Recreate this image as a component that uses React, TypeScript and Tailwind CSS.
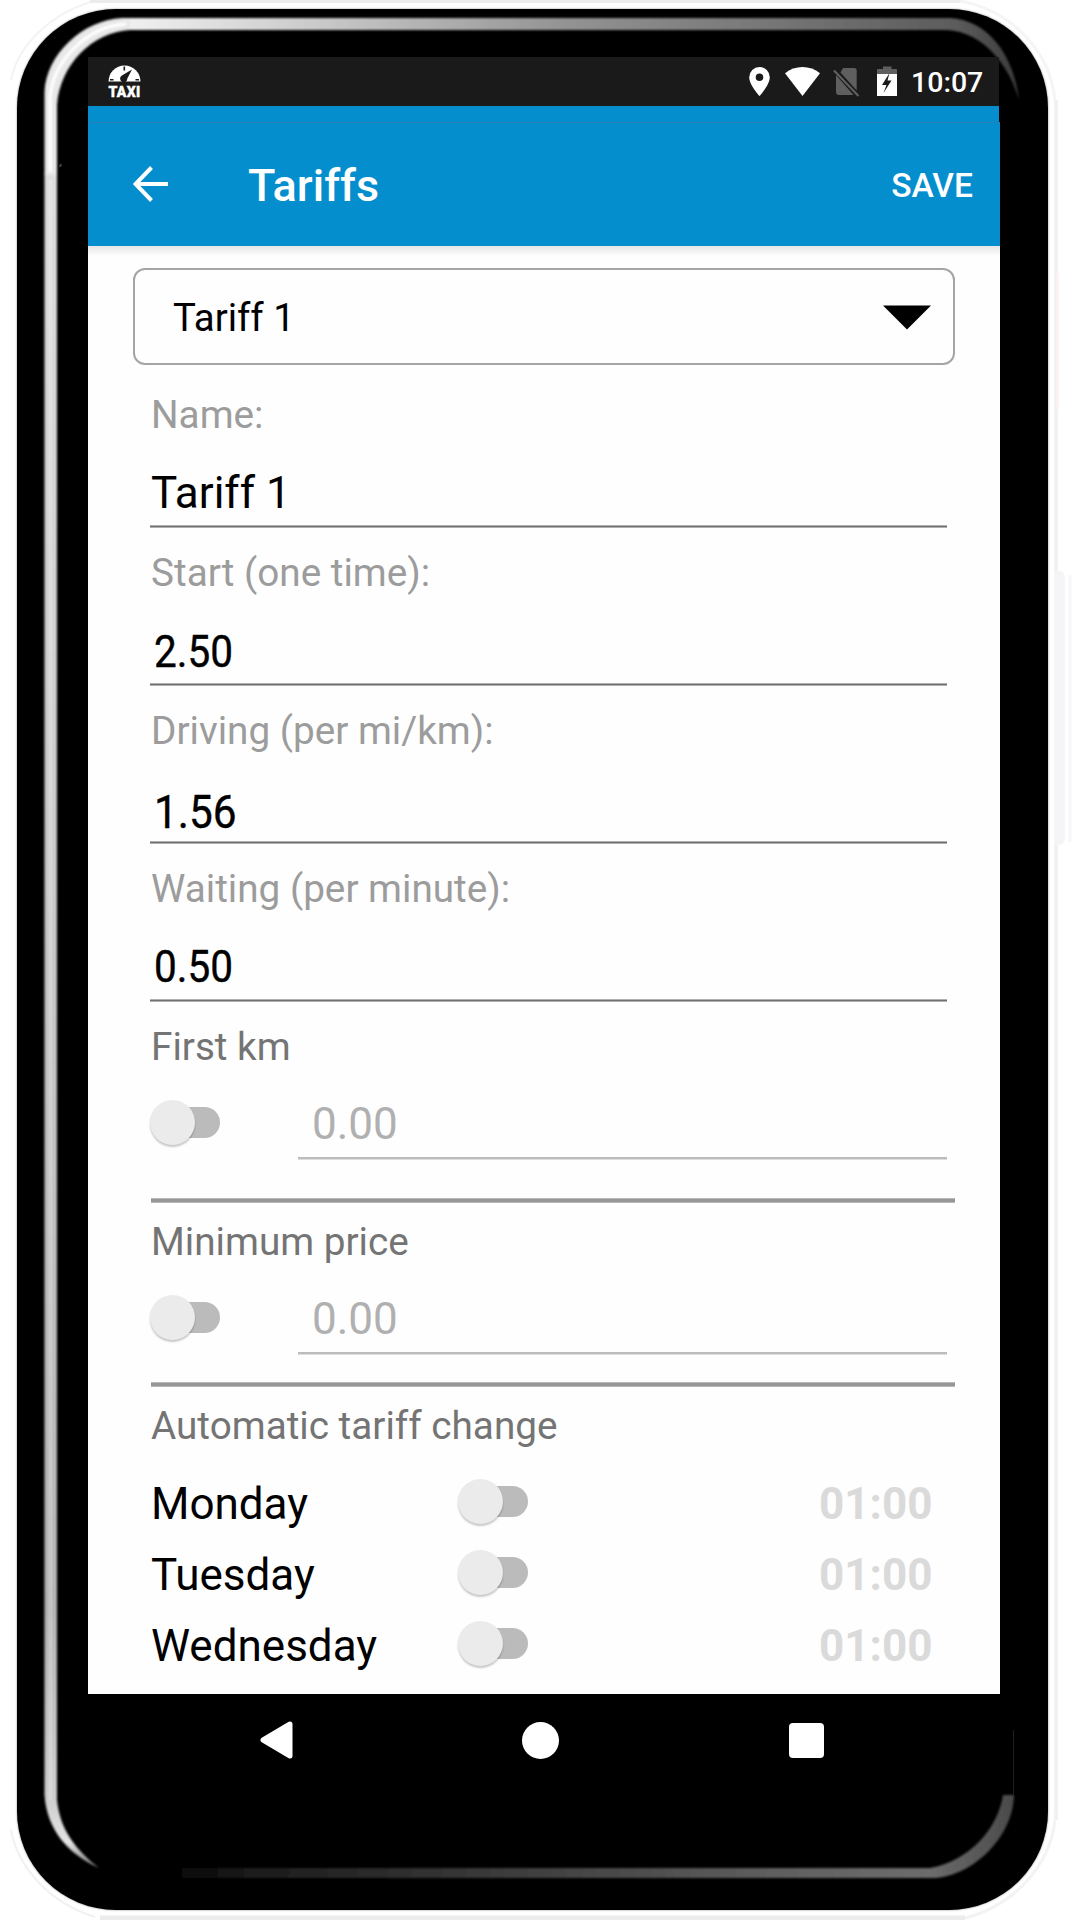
import React, { useState } from "react";

const fields = [
    { label: "Name:", value: "Tariff 1", className: "text-[44px] translate-x-[1px] translate-y-[1px]" },
    {
        label: "Start (one time):",
        value: "2.50",
        className:
            "text-[45px] translate-x-[4px] translate-y-[2px] scale-x-[0.9] [-webkit-text-stroke:0.4px_#000]",
    },
    {
        label: "Driving (per mi/km):",
        value: "1.56",
        className:
            "text-[46px] translate-x-[4px] translate-y-[4px] scale-x-[0.92] [-webkit-text-stroke:0.4px_#000]",
    },
    {
        label: "Waiting (per minute):",
        value: "0.50",
        className:
            "text-[45px] translate-x-[4px] translate-y-[1px] scale-x-[0.9] [-webkit-text-stroke:0.4px_#000]",
    },
];

const days = ["Monday", "Tuesday", "Wednesday"];

const Bezel: React.FC = () => (
    <svg
        className="absolute top-0 left-0"
        width="1080"
        height="1920"
        viewBox="0 0 1080 1920"
        fill="none"
    >
        <defs>
            <linearGradient id="top" gradientUnits="userSpaceOnUse" x1="110" y1="0" x2="1020" y2="0">
                <stop offset="0" stopColor="#f4f4f4" />
                <stop offset="0.2" stopColor="#cfcfcf" />
                <stop offset="0.5" stopColor="#939393" />
                <stop offset="0.93" stopColor="#5c5c5c" />
                <stop offset="1" stopColor="#3a3a3a" />
            </linearGradient>
            <linearGradient id="side" gradientUnits="userSpaceOnUse" x1="0" y1="170" x2="0" y2="1868">
                <stop offset="0" stopColor="#dedede" />
                <stop offset="0.85" stopColor="#b5b5b5" />
                <stop offset="0.96" stopColor="#cfcfcf" />
                <stop offset="0.985" stopColor="#e4e4e4" />
                <stop offset="1" stopColor="#777" />
            </linearGradient>
            <linearGradient id="bottom" gradientUnits="userSpaceOnUse" x1="160" y1="0" x2="1014" y2="0">
                <stop offset="0" stopColor="#000" />
                <stop offset="0.1" stopColor="#1a1a1a" />
                <stop offset="0.75" stopColor="#626262" />
                <stop offset="0.9" stopColor="#6c6c6c" />
                <stop offset="1" stopColor="#4a4a4a" />
            </linearGradient>
            <filter id="soft" x="-5%" y="-5%" width="110%" height="110%">
                <feGaussianBlur stdDeviation="0.8" />
            </filter>
        </defs>
        {/* faint outline around the body */}
        <path d="M90 1H960" stroke="#ececec" strokeWidth="4" />
        <path d="M100 1918H965" stroke="#ececec" strokeWidth="5" />
        <path d="M1056 100V1820" stroke="#f2f2f2" strokeWidth="4" />
        <path d="M1057 273V410" stroke="#fbf1ee" strokeWidth="3" />
        <path d="M11 80C18 45 50 15 90 2" stroke="#f3f3f3" strokeWidth="2" />
        <path d="M11 1830C18 1868 50 1903 95 1917" stroke="#f1f1f1" strokeWidth="2" />
        <path d="M1055 1820C1050 1865 1015 1905 965 1918" stroke="#f3f3f3" strokeWidth="3" />
        <path d="M960 1C1010 10 1050 50 1055 100" stroke="#f5f5f5" strokeWidth="3" />
        <path d="M1054 571H1061Q1065 573 1065 580V838Q1064 844 1060 845H1054Z" fill="#f5f4f6" />
        <path d="M1070 575V842" stroke="#f8f6f7" strokeWidth="3" />
        {/* highlights */}
        <g filter="url(#soft)">
            <path d="M122 18H950C988 20 1014 55 1019 100C1010 68 985 32 947 30H122Z" fill="url(#top)" />
            <path d="M44.500 174H57V1800C60 1830 76 1850 99 1868C68 1854 47 1830 44.500 1795Z" fill="url(#side)" />
            <path d="M44.500 175V92C46 55 82 20 122 18H130V30C92 32 60 65 57 105V175Z" fill="#e8e8e8" />
            <path d="M50 172V98C53 60 88 26 126 24" stroke="#fff" strokeWidth="3" />
            <path d="M160 1868H930C970 1861 998 1828 1003 1795H1014C1013 1838 972 1876 935 1878H160Z" fill="url(#bottom)" />
        </g>
        <path d="M50.500 180V1800" stroke="#fff" strokeOpacity="0.2" strokeWidth="4" />
        <path d="M1013.500 1730V1795" stroke="#202020" strokeWidth="1" />
        <path d="M60 167l1-3" stroke="#444" strokeWidth="2" />
    </svg>
);

const StatusBar: React.FC = () => (
    <div className="flex h-[49px] w-[911px] items-start bg-[#1a1a1a]">
        <div className="ml-[20px] mt-[8px] flex w-[33px] flex-col items-center">
            <svg width="33" height="17" viewBox="0 0 33 17">
                <path d="M0.500 16.500A16 16 0 0 1 32.500 16.500Z" fill="#fff" />
                <path d="M24 4.500L19.300 13.500A3.600 3.600 0 1 1 13.500 10.800Z" fill="#1a1a1a" />
                <path d="M16.300 1.500V5.500M2 14.800H5.500M27.500 14.800H31" stroke="#1a1a1a" strokeWidth="1.600" />
            </svg>
            <span className="mt-[3px] text-[14px] leading-[15px] font-black tracking-[0.3px] text-white [-webkit-text-stroke:0.4px_#fff]">
                TAXI
            </span>
        </div>
        <svg className="ml-[608px] mt-[10px]" width="21" height="29" viewBox="0 0 21 29">
            <path
                d="M10.500 0A10.300 10.300 0 0 0 0.200 10.300C0.200 18 10.500 29 10.500 29S20.800 18 20.800 10.300A10.300 10.300 0 0 0 10.500 0ZM10.500 6.500A3.800 3.800 0 1 1 10.500 14.100A3.800 3.800 0 0 1 10.500 6.500Z"
                fill="#fff"
            />
        </svg>
        <svg className="ml-[15px] mt-[10px]" width="35" height="29" viewBox="0 0 35 29">
            <path d="M0 6.300C10 -2 25 -2 35 6.300L17.500 29Z" fill="#fff" />
        </svg>
        <svg className="ml-[13px] mt-[10px]" width="27" height="31" viewBox="0 0 27 31">
            <path d="M10 1H21Q23.700 1 23.700 3.700V23.500L7.500 5.500ZM3 8L20.500 28H6Q3 28 3 25Z" fill="#5f5f5f" />
            <path d="M1 3.500L25.500 29" stroke="#5f5f5f" strokeWidth="2.200" />
        </svg>
        <svg className="ml-[17px] mt-[9px]" width="20" height="30" viewBox="0 0 20 30">
            <path d="M0 8V3.500Q0 3 1 3H6V0.500H14.500V3H19Q20 3 20 3.500V8Z" fill="#5f5f5f" />
            <path d="M0 8H20V30H0Z" fill="#fff" />
            <path d="M12.500 7L5 19H9.500L6.500 27L14.500 14.500H10.500Z" fill="#1a1a1a" />
        </svg>
        <span className="ml-[14px] mt-[8px] text-[28.5px] leading-[36px] font-medium text-white">
            10:07
        </span>
    </div>
);

const Toggle: React.FC = () => {
    const [on, setOn] = useState(false);
    return (
        <button
            onClick={() => setOn(!on)}
            className="relative flex h-[45px] w-[70px] shrink-0 items-center justify-end"
        >
            <span className="h-[31px] w-[60px] rounded-full bg-[#bbbbbb]" />
            <span
                className={`absolute top-0 size-[45px] rounded-full bg-[#ebebeb] shadow-[0_2px_2px_rgba(0,0,0,0.22)] ${
                    on ? "right-0" : "left-0"
                }`}
            />
        </button>
    );
};

const OptionalPrice: React.FC<{ label: string }> = ({ label }) => (
    <>
        <p className="ml-[63px] h-[46px] text-[38.7px] leading-[46px] text-[#747474]">{label}</p>
        <div className="ml-[62px] mt-[26px] flex">
            <div className="mt-[4px]">
                <Toggle />
            </div>
            <div className="ml-[78px] w-[649px]">
                <p className="h-[54px] pt-px pl-[14px] text-[44px] leading-[54px] text-[#b0b0b0]">0.00</p>
                <div className="mt-[7px] h-[3px] border-b border-[#dedede] bg-[#bcbcbc]" />
            </div>
        </div>
    </>
);

const App: React.FC = () => {
    return (
        <div className="relative h-[1920px] w-[1080px] overflow-hidden bg-white pt-[9px] pl-[17px] font-[Roboto,sans-serif]">
            <div className="h-[1901px] w-[1031px] rounded-[99px] bg-black pt-[48px] pl-[71px] shadow-[0_0_2px_#777]">
                <Bezel />
                <div className="relative w-[912px]">
                    <StatusBar />
                    <div className="h-[16px] w-[911px] bg-[#048ece]" />
                    <header className="flex h-[124px] items-start border-t border-[#2381b5] bg-[#048ece] text-white">
                        <svg className="ml-[45px] mt-[43px]" width="36" height="36" viewBox="0 0 36 36">
                            <path d="M18.500 1.500L2.500 18L18.500 34.500M2.500 18H35" fill="none" stroke="#fff" strokeWidth="4" />
                        </svg>
                        <h1 className="ml-[79px] mt-[36px] text-[45px] leading-[54px] font-medium">
                            Tariffs
                        </h1>
                        <button className="mr-[27px] ml-auto mt-[43px] text-[33.6px] leading-[40px] font-medium">
                            SAVE
                        </button>
                    </header>
                    <main className="h-[1448px] overflow-hidden bg-[#fefefe]">
                        <div className="h-[10px] bg-linear-to-b from-[#e6e6e6] to-[#fefefe]" />
                        <div className="mt-[12px] ml-[45px] flex h-[97px] w-[822px] items-center justify-between rounded-[12px] border-2 border-[#a5a5a5] pt-[2px] pr-[22px] pl-[38px]">
                            <span className="text-[38.4px] leading-[46px]">Tariff 1</span>
                            <svg width="48" height="25" viewBox="0 0 48 25">
                                <path d="M0 0.500H48L24 24.500Z" fill="#000" />
                            </svg>
                        </div>
                        <div className="mt-[5px] ml-[62px] w-[797px]">
                            {fields.map((field) => (
                                <div key={field.label} className="h-[158px] pt-[22px]">
                                    <p className="h-[46px] pl-px text-[38.7px] leading-[46px] text-[#9c9c9c]">
                                        {field.label}
                                    </p>
                                    <p
                                        className={`mt-[27px] h-[54px] origin-left leading-[54px] text-black ${field.className}`}
                                    >
                                        {field.value}
                                    </p>
                                    <div className="mt-[6px] h-[3px] border-y border-[#b0b0b0] bg-[#707070]" />
                                </div>
                            ))}
                        </div>
                        <div className="mt-[22px]">
                            <OptionalPrice label="First km" />
                        </div>
                        <div className="mt-[38px] ml-[63px] h-[5px] w-[804px] border-y border-[#b9b9b9] bg-[#979797]" />
                        <div className="mt-[16px]">
                            <OptionalPrice label="Minimum price" />
                        </div>
                        <div className="mt-[27px] ml-[63px] h-[5px] w-[804px] border-y border-[#b9b9b9] bg-[#979797]" />
                        <p className="mt-[16px] ml-[63px] h-[46px] text-[38.7px] leading-[46px] text-[#747474]">
                            Automatic tariff change
                        </p>
                        <div className="mt-[17px] ml-[63px]">
                            {days.map((day) => (
                                <div key={day} className="flex h-[71px] items-center">
                                    <span className="w-[307px] pt-[4px] text-[44px] leading-[54px]">{day}</span>
                                    <Toggle />
                                    <span className="ml-[291px] pt-[4px] text-[44px] leading-[54px] font-bold text-[#dadada]">
                                        01:00
                                    </span>
                                </div>
                            ))}
                        </div>
                    </main>
                    <nav className="flex h-[92px] items-center">
                        <svg className="ml-[172px]" width="33" height="38" viewBox="0 0 33 38">
                            <path d="M3 19L30 3V35Z" fill="#fff" stroke="#fff" strokeWidth="5" strokeLinejoin="round" />
                        </svg>
                        <span className="ml-[229px] size-[37px] rounded-full bg-white" />
                        <span className="ml-[230px] size-[35px] rounded-[4px] bg-white" />
                    </nav>
                </div>
            </div>
        </div>
    );
};

export default App;
